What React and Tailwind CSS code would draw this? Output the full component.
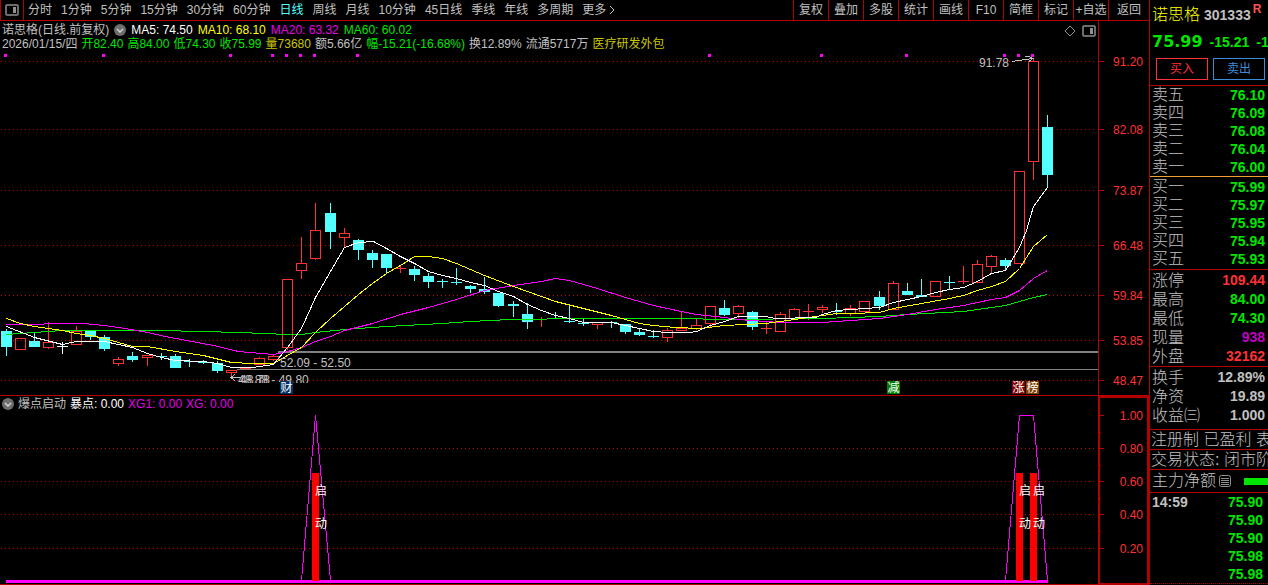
// Stock terminal: toolbar, daily candles with moving averages, signal pane and quote column.

const PERIODS = [
  '分时', '1分钟', '5分钟', '15分钟', '30分钟', '60分钟', '日线', '周线',
  '月线', '10分钟', '45日线', '季线', '年线', '多周期',
]

const TOOLS = ['复权', '叠加', '多股', '统计', '画线', 'F10', '简框', '标记', '+自选']

const AVERAGES = [
  { text: 'MA5: 74.50', color: 'text-white' },
  { text: 'MA10: 68.10', color: 'text-[#ffff00]' },
  { text: 'MA20: 63.32', color: 'text-[#e600e6]' },
  { text: 'MA60: 60.02', color: 'text-[#00e600]' },
]

const DAY = [
  { text: '2026/01/15/四', color: 'text-[#c0c0c0]' },
  { text: '开82.40', color: 'text-[#00e600]' },
  { text: '高84.00', color: 'text-[#00e600]' },
  { text: '低74.30', color: 'text-[#00e600]' },
  { text: '收75.99', color: 'text-[#00e600]' },
  { text: '量73680', color: 'text-[#c8c800]' },
  { text: '额5.66亿', color: 'text-[#c0c0c0]' },
  { text: '幅-15.21(-16.68%)', color: 'text-[#00e600]' },
  { text: '换12.89%', color: 'text-[#c0c0c0]' },
  { text: '流通5717万', color: 'text-[#c0c0c0]' },
  { text: '医疗研发外包', color: 'text-[#c8c800]' },
]

// [direction, high, body top, body bottom, low] in chart units
const CANDLES = [
  ['d', 329, 331, 347, 356], ['u', 338, 338, 349, 349], ['d', 332, 341, 347, 347],
  ['u', 322, 342, 347, 349], ['w', 342, 346, 346, 354], ['u', 326, 331, 344, 344],
  ['d', 330, 330, 337, 340], ['d', 335, 337, 349, 351], ['u', 357, 359, 363, 366],
  ['d', 352, 356, 360, 362], ['u', 355, 355, 357, 366], ['d', 353, 356, 357, 360],
  ['d', 354, 356, 368, 368], ['d', 359, 361, 362, 367], ['d', 360, 362, 363, 364],
  ['d', 361, 363, 371, 373], ['u', 370, 370, 372, 377], ['u', 367, 368, 369, 369],
  ['u', 357, 358, 364, 364], ['u', 355, 356, 359, 361], ['u', 279, 279, 347, 350],
  ['u', 237, 263, 270, 279], ['u', 203, 230, 258, 260], ['d', 203, 213, 232, 249],
  ['u', 228, 233, 237, 248], ['d', 239, 240, 250, 260], ['d', 250, 253, 260, 268],
  ['d', 254, 254, 268, 273], ['u', 265, 268, 269, 273], ['d', 266, 269, 275, 281],
  ['d', 273, 276, 282, 288], ['d', 279, 281, 282, 288], ['d', 268, 282, 283, 285],
  ['d', 285, 286, 289, 293], ['d', 277, 289, 292, 294], ['d', 293, 293, 306, 307],
  ['d', 301, 304, 306, 317], ['d', 303, 314, 322, 329], ['u', 317, 319, 319, 327],
  ['d', 312, 318, 319, 319], ['d', 306, 321, 322, 323], ['d', 319, 323, 324, 326],
  ['u', 322, 322, 324, 329], ['d', 321, 322, 323, 328], ['d', 324, 324, 332, 334],
  ['d', 329, 332, 335, 336], ['d', 330, 336, 337, 338], ['u', 328, 330, 337, 342],
  ['u', 312, 328, 330, 330], ['u', 319, 325, 328, 330], ['u', 306, 306, 323, 327],
  ['d', 300, 308, 315, 316], ['u', 305, 306, 313, 318], ['d', 311, 312, 327, 330],
  ['u', 322, 328, 329, 334], ['u', 312, 314, 331, 331], ['u', 308, 309, 318, 318],
  ['u', 304, 311, 311, 320], ['u', 305, 307, 309, 313], ['d', 303, 311, 312, 315],
  ['u', 305, 308, 313, 316], ['u', 301, 301, 311, 311], ['d', 291, 297, 306, 310],
  ['u', 281, 283, 309, 309], ['d', 283, 291, 295, 295], ['d', 279, 295, 297, 297],
  ['u', 281, 281, 296, 296], ['d', 276, 282, 283, 290], ['u', 266, 281, 282, 284],
  ['u', 260, 264, 282, 282], ['u', 255, 256, 266, 273], ['d', 258, 260, 266, 270],
  ['u', 171, 171, 263, 263], ['u', 58, 61, 161, 180], ['d', 115, 127, 175, 187],
]

const LINES = [
  {
    color: '#00e600',
    points:
      '6,334 34,332 62,330 160,330 240,332 287,334 301,334 315,332 344,329 386,326 442,323 470,321 510,319 583,318 680,318 724,319 822,318 879,316 907,314 963,311 1005,305 1033,297 1047,294',
  },
  {
    color: '#ff00ff',
    points:
      '6,324 83,323 104,325 125,328 147,332 165,336 186,340 213,345 238,351 273,354 287,351 301,347 315,341 330,336 344,330 372,323 400,314 428,307 456,299 484,290 513,285 541,281 555,278 569,280 583,284 597,288 625,297 653,305 681,311 696,314 724,317 738,319 765,321 780,322 822,322 850,320 879,318 907,314 935,309 963,305 991,299 1005,297 1019,290 1033,278 1047,270',
  },
  {
    color: '#ffff00',
    points:
      '6,318 20,323 34,326 62,330 76,333 90,335 104,338 118,342 132,346 147,346 175,351 203,355 231,362 252,363 273,363 287,355 301,347 315,332 330,318 344,306 358,294 372,283 386,273 400,265 414,256 428,256 442,258 456,263 470,269 484,275 513,286 541,296 555,301 583,308 611,315 639,323 653,325 675,327 700,328 724,325 765,323 794,319 822,315 836,313 850,313 879,312 893,308 921,303 949,298 963,295 977,290 991,286 1005,281 1019,268 1033,246 1047,234',
  },
  {
    color: '#ffffff',
    points:
      '6,326 34,337 62,344 76,341 104,341 118,344 132,347 147,353 161,357 175,360 203,361 217,363 231,367 252,367 273,364 287,347 301,328 315,297 330,271 344,247 358,242 373,241 386,248 400,256 414,263 428,271 442,275 456,278 470,282 484,285 498,291 513,296 527,304 541,310 555,315 569,318 583,322 611,322 625,325 639,328 653,331 667,332 690,332 696,331 710,325 724,321 738,316 765,316 775,318 815,317 822,314 836,310 850,309 879,307 893,302 907,299 921,296 935,292 949,289 963,287 977,281 991,273 1005,270 1019,247 1026,230 1033,206 1047,187',
  },
]

const PRICE_AXIS = [
  ['91.20', 61], ['82.08', 129], ['73.87', 190], ['66.48', 245],
  ['59.84', 295], ['53.85', 340], ['48.47', 380],
]

const SIGNAL_AXIS = [['1.00', 415], ['0.80', 448], ['0.60', 481], ['0.40', 514], ['0.20', 548]]

const DOTS = [5, 103, 230, 272, 286, 300, 314, 357, 709, 821, 906, 1004, 1018, 1032]

const BADGES = [
  { text: '财', x: 280, fill: '#003264' },
  { text: '减', x: 887, fill: '#008000' },
  { text: '涨', x: 1012, fill: '#800000' },
  { text: '榜', x: 1026, fill: '#804000' },
]

const SIGNALS = [
  { bar: 312, label: 321 },
  { bar: 1016, label: 1025 },
  { bar: 1030, label: 1039 },
]

const SELLS = [['卖五', '76.10'], ['卖四', '76.09'], ['卖三', '76.08'], ['卖二', '76.04'], ['卖一', '76.00']]
const BUYS = [['买一', '75.99'], ['买二', '75.97'], ['买三', '75.95'], ['买四', '75.94'], ['买五', '75.93']]

const DETAILS = [
  ['涨停', '109.44', 'text-[#ff3232]'],
  ['最高', '84.00', 'text-[#00e600]'],
  ['最低', '74.30', 'text-[#00e600]'],
  ['现量', '938', 'text-[#c000c0]'],
  ['外盘', '32162', 'text-[#ff3232]'],
]

const RATIOS = [
  ['换手', '12.89%', 'text-[#c0c0c0]'],
  ['净资', '19.89', 'text-[#c0c0c0]'],
  ['收益㈢', '1.000', 'text-[#c0c0c0]'],
]

const TICKS = [['14:59', '75.90'], ['', '75.90'], ['', '75.90'], ['', '75.98'], ['', '75.98']]

// the pitch is a little over 14, so one extra unit is added every 13 bars
const candleX = (i) => 6 + 14 * i + Math.floor((i + 3) / 13)

function PanelIcon() {
  return (
    <svg className="h-3 w-3.5 shrink-0" viewBox="0 0 14 12" fill="none">
      <rect x="1" y="1" width="12" height="10" rx="1" stroke="#909090" strokeWidth="1.5" />
      <rect x="8" y="3" width="3" height="6" fill="#909090" />
    </svg>
  )
}

function ChevronBadge() {
  return (
    <svg className="h-3 w-3 shrink-0" viewBox="0 0 12 12">
      <circle cx="6" cy="6" r="6" fill="#6e6e6e" />
      <path d="M3 5l3 3 3-3" stroke="#d8d8d8" strokeWidth="1.4" fill="none" />
    </svg>
  )
}

function Toolbar() {
  return (
    <nav className="flex h-[21px] items-stretch border-b border-l border-[#b40000] text-[12px] leading-[20px] text-[#c0c0c0]">
      <button aria-label="侧栏" className="flex w-[23px] items-center justify-center border-r border-[#b40000]">
        <PanelIcon />
      </button>
      <div className="flex flex-1 gap-[9px] pl-[4px] whitespace-nowrap">
        {PERIODS.map((p) => (
          <button key={p} className={p === '日线' ? 'text-[#54ffff]' : ''}>
            {p}
          </button>
        ))}
        <button className="flex items-center gap-[2px]">
          更多
          <svg className="h-2.5 w-2" viewBox="0 0 8 10" fill="none" stroke="#c0c0c0">
            <path d="M2 1l4 4-4 4" />
          </svg>
        </button>
      </div>
      {TOOLS.map((t) => (
        <button key={t} className="w-[35px] border-l border-[#b40000] whitespace-nowrap">
          {t}
        </button>
      ))}
      <button className="w-[41px] border-l border-[#b40000]">返回</button>
    </nav>
  )
}

function ChartHeader() {
  return (
    <header className="mr-[50px] flex h-[31px] justify-between border-r border-[#b40000] pt-[2px] pr-[2px] pl-[2px] text-[12px] leading-[14px] whitespace-nowrap">
      <div>
        <div className="flex items-center gap-[5px]">
          <h1 className="text-[#c0c0c0]">诺思格(日线.前复权)</h1>
          <ChevronBadge />
          {AVERAGES.map((a) => (
            <span key={a.text} className={a.color}>{a.text}</span>
          ))}
        </div>
        <div className="flex gap-1">
          {DAY.map((d) => (
            <span key={d.text} className={d.color}>{d.text}</span>
          ))}
        </div>
      </div>
      <div className="flex h-4 items-center gap-[6px]">
        <svg className="h-3 w-3" viewBox="0 0 12 12" fill="none" stroke="#909090">
          <path d="M6 1l5 5-5 5-5-5z" />
        </svg>
        <PanelIcon />
      </div>
    </header>
  )
}

function Candle({ i, data: [kind, high, top, bottom, low] }) {
  const x = candleX(i)
  const color = kind === 'd' ? '#54ffff' : kind === 'w' ? '#ffffff' : '#ff3232'
  const hollow = kind === 'u' && bottom - top > 1
  return (
    <g>
      {top > high && <rect x={x} y={high} width="1" height={top - high} fill={color} />}
      {low > bottom && <rect x={x} y={bottom} width="1" height={low - bottom} fill={color} />}
      {hollow ? (
        <rect x={x - 4.5} y={top + 0.5} width="10" height={bottom - top} fill="none" stroke={color} />
      ) : (
        <rect x={x - 5} y={top} width="11" height={Math.max(bottom - top, 1)} fill={color} />
      )}
    </g>
  )
}

function GridLine({ y }) {
  return <path d={`M1 ${y + 0.5}H1097`} stroke="#c00000" strokeDasharray="1 3" />
}

function PriceChart() {
  return (
    <svg className="block w-full border-b border-[#b40000] text-[12px]" viewBox="0 52 1149 343" role="img" aria-label="日线">
      <g shapeRendering="crispEdges">
        {PRICE_AXIS.map(([label, y]) => (
          <g key={label}>
            <GridLine y={y} />
            <path d={`M1099 ${y + 0.5}h5`} stroke="#b40000" />
          </g>
        ))}
        <path d="M1098.5 52V395" stroke="#b40000" />
        {CANDLES.map((c, i) => (
          <Candle key={i} i={i} data={c} />
        ))}
        <path d="M278 352H1098" stroke="#808080" strokeWidth="2" />
        <path d="M237 369.5H1098" stroke="#808080" />
        {LINES.map((l) => (
          <polyline key={l.color} points={l.points} fill="none" stroke={l.color} transform="translate(0.5 0.5)" />
        ))}
        {DOTS.map((x) => (
          <rect key={x} x={x - 1} y="54" width="3" height="3" fill="#ff00ff" />
        ))}
      </g>
      {PRICE_AXIS.map(([label, y]) => (
        <text key={label} x="1143" y={y + 5} textAnchor="end" fill="#ff3232">{label}</text>
      ))}
      <g fill="#c0c0c0">
        <text x="979" y="67">91.78</text>
        <text x="280" y="367">52.09 - 52.50</text>
        <clipPath id="labels">
          <rect x="230" y="370" width="90" height="13" />
        </clipPath>
        <g clipPath="url(#labels)">
          <text x="240" y="384">48.78</text>
          <text x="238" y="384">48.88 - 49.80</text>
        </g>
      </g>
      <g fill="none" stroke="#c0c0c0" shapeRendering="crispEdges">
        <path d="M1012 61.5L1032 58.5M1025 56.5h4l4 2-4 3" />
        <path d="M241 377.5H231M235 374l-4 3.5 4 3.5" />
      </g>
      {BADGES.map((b) => (
        <g key={b.text}>
          <rect x={b.x} y="381" width="13" height="13" fill={b.fill} />
          <text x={b.x + 6.5} y="392" textAnchor="middle" fill="#ffffff">{b.text}</text>
        </g>
      ))}
    </svg>
  )
}

function SignalChart() {
  return (
    <section>
      <div className="flex h-4 text-[12px] leading-4 whitespace-nowrap">
        <div className="flex flex-1 items-center gap-[4px] pl-[2px]">
          <ChevronBadge />
          <h2 className="text-[#c0c0c0]">爆点启动</h2>
          <span className="text-white">暴点: 0.00</span>
          <span className="text-[#e600e6]">XG1: 0.00</span>
          <span className="text-[#e600e6]">XG: 0.00</span>
        </div>
        <div className="w-[51px] border-x-2 border-t-2 border-[#b40000]" />
      </div>
      <svg className="block w-full overflow-visible text-[12px]" viewBox="0 412 1149 173" role="img" aria-label="爆点启动">
        <g shapeRendering="crispEdges">
          {SIGNAL_AXIS.map(([label, y], i) => (
            <g key={label}>
              {i > 0 && <GridLine y={y} />}
              <path d={`M1100 ${y + 0.5}h4`} stroke="#b40000" />
              {i < 4 && <path d={`M1100 ${y + 17}h1`} stroke="#b40000" />}
            </g>
          ))}
          <path d="M1099 412V584H1148V412" fill="none" stroke="#b40000" strokeWidth="2" />
          <path d="M0 584.5H1149" stroke="#b40000" />
          <rect x="6" y="580" width="1042" height="3" fill="#ff00ff" />
          {SIGNALS.map((s) => (
            <rect key={s.bar} x={s.bar} y="473" width="7" height="108" fill="#ff0000" />
          ))}
          <g fill="none" stroke="#ff00ff">
            <path d="M301.5 580.5L315.5 415.5L330.5 580.5" />
            <path d="M1005.5 580.5L1019.5 415.5H1033.5L1047.5 580.5" />
          </g>
        </g>
        {SIGNAL_AXIS.map(([label, y]) => (
          <text key={label} x="1143" y={y + 5} textAnchor="end" fill="#ff3232">{label}</text>
        ))}
        {SIGNALS.map((s) => (
          <g key={s.bar} fill="#ffffff" textAnchor="middle">
            <text x={s.label} y="495">启</text>
            <text x={s.label} y="528">动</text>
          </g>
        ))}
      </svg>
    </section>
  )
}

function Book({ rows }) {
  return (
    <table className="w-full">
      <tbody>
        {rows.map(([label, price]) => (
          <tr key={label} className="h-[18px]">
            <th scope="row" className="p-0 pl-[2px] text-left text-[16px] leading-[18px] font-light">{label}</th>
            <td className="p-0 pr-[3px] text-right text-[14px] leading-[18px] font-bold text-[#00e600]">{price}</td>
          </tr>
        ))}
      </tbody>
    </table>
  )
}

function Stats({ rows }) {
  return (
    <table className="w-full">
      <tbody>
        {rows.map(([label, value, color]) => (
          <tr key={label} className="h-[19px]">
            <th scope="row" className="p-0 pl-[2px] text-left text-[16px] leading-[19px] font-light whitespace-nowrap">{label}</th>
            <td className={`p-0 pr-[3px] text-right text-[14px] leading-[19px] font-bold ${color}`}>{value}</td>
          </tr>
        ))}
      </tbody>
    </table>
  )
}

function Quote() {
  return (
    <aside className="w-[119px] shrink-0 overflow-hidden border-l border-[#b40000] text-[#c0c0c0]">
      <div className="border-b border-[#b40000] whitespace-nowrap">
        <div className="flex h-[30px] items-center pl-[2px]">
          <h2 className="text-[16px] font-light text-[#ffff00]">诺思格</h2>
          <span className="ml-1 text-[14px] font-bold">301333</span>
          <sup className="ml-[2px] text-[12px] font-bold text-[#ff5050]">R</sup>
        </div>
        <div className="flex h-6 items-center gap-[7px] pl-[2px] text-[14px] font-bold text-[#00e600]">
          <strong className="font-['DejaVu_Sans'] text-[16px]">75.99</strong>
          <span>-15.21</span>
          <span>-16.68%</span>
        </div>
        <div className="flex gap-[5px] px-[3px] pt-[4px] pb-[5px] pl-[6px] text-[12px]">
          <button className="h-[22px] flex-1 border border-[#ff3232] text-[#ff3232]">买入</button>
          <button className="h-[22px] flex-1 border border-[#3c8cdc] text-[#3c8cdc]">卖出</button>
        </div>
      </div>
      <div className="border-b border-[#f0a030]">
        <Book rows={SELLS} />
      </div>
      <div className="border-b border-[#b40000] py-[1px]">
        <Book rows={BUYS} />
      </div>
      <div className="border-b border-[#b40000] pt-[1px]">
        <Stats rows={DETAILS} />
      </div>
      <div className="border-b border-[#b40000] pt-[1px] pb-[4px]">
        <Stats rows={RATIOS} />
      </div>
      <p className="border-b border-[#b40000] pl-[1px] text-[16px] leading-[19px] font-light whitespace-nowrap">
        注册制 已盈利 表决权
      </p>
      <p className="border-b border-[#b40000] pl-[1px] text-[16px] leading-[19px] font-light whitespace-nowrap">
        交易状态: 闭市阶段
      </p>
      <div className="flex h-[23px] items-center border-b border-[#b40000] pl-[2px] text-[16px] font-light whitespace-nowrap">
        主力净额
        <svg className="ml-[3px] h-3 w-3 shrink-0" viewBox="0 0 12 12" fill="none" stroke="#909090">
          <rect x="0.5" y="0.5" width="11" height="11" rx="2" />
          <path d="M2 3.5h8M2 5.5h8M2 7.5h8M2 9.5h8" />
        </svg>
        <span className="ml-[13px] h-[7px] flex-1 bg-[#00e600]" />
      </div>
      <table className="w-full text-[14px] leading-[18px] font-bold">
        <tbody>
          {TICKS.map(([time, price], i) => (
            <tr key={i} className="h-[18px]">
              <td className="p-0 pl-[2px]">{time}</td>
              <td className="p-0 pr-[5px] text-right text-[#00e600]">{price}</td>
            </tr>
          ))}
        </tbody>
      </table>
      <div className="border-b border-dotted border-[#b40000]" />
    </aside>
  )
}

export default function App() {
  return (
    <div className="flex items-stretch bg-black font-['Liberation_Sans','Noto_Sans_CJK_SC',sans-serif]">
      <main className="min-w-0 flex-1">
        <Toolbar />
        <ChartHeader />
        <PriceChart />
        <SignalChart />
      </main>
      <Quote />
    </div>
  )
}
